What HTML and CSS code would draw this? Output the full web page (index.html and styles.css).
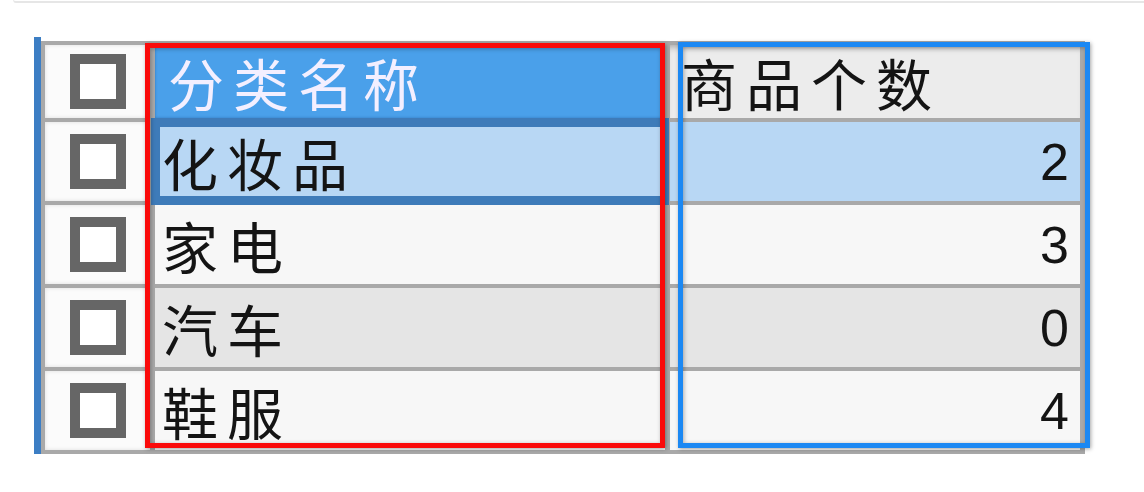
FILE: index.html
```html
<!DOCTYPE html>
<html lang="zh-CN">
<head>
<meta charset="utf-8">
<title>分类</title>
<link rel="stylesheet" href="styles.css">
</head>
<body>
<div class="topline"></div>
<div class="stage">
  <div class="bar"></div>
  <div class="grid">
    <div class="cell chk"><span class="box"></span></div>
    <div class="cell name head">分类名称</div>
    <div class="cell count headc">商品个数</div>

    <div class="cell chk"><span class="box"></span></div>
    <div class="cell name sel">化妆品</div>
    <div class="cell count num selrow">2</div>

    <div class="cell chk"><span class="box"></span></div>
    <div class="cell name light">家电</div>
    <div class="cell count num light">3</div>

    <div class="cell chk"><span class="box"></span></div>
    <div class="cell name grey">汽车</div>
    <div class="cell count num grey">0</div>

    <div class="cell chk"><span class="box"></span></div>
    <div class="cell name light">鞋服</div>
    <div class="cell count num light">4</div>
  </div>
  <div class="mark red"></div>
  <div class="mark blue"></div>
</div>
</body>
</html>
```
FILE: styles.css
```css
html, body {
  margin: 0;
  background: #ffffff;
}

.topline {
  height: 1px;
  margin-left: 13px;
  border-bottom: 2px solid #e6e6e6;
  border-left: 1px solid #ececec;
  border-bottom-left-radius: 5px;
}

.stage {
  position: relative;
  display: flex;
  margin-top: 34px;
  padding-left: 34px;
}

.bar {
  width: 7px;
  background: #3c7ec4;
}

.grid {
  margin-top: 4px;
  display: grid;
  grid-template-columns: 105px 510px 410px;
  grid-template-rows: 73px repeat(4, 79px);
  column-gap: 5px;
  row-gap: 4px;
  padding: 4px 5px 4px 4px;
  background: #a9a9a9;
}

.cell {
  display: flex;
  align-items: center;
  font-family: "Noto Sans CJK SC", "Noto Sans", sans-serif;
  font-size: 56px;
  letter-spacing: 9px;
  color: #141414;
  white-space: nowrap;
}

.chk {
  justify-content: center;
  background: #fbfbfb;
  box-shadow: inset 0 0 4px rgba(0, 0, 0, 0.12);
}

.box {
  width: 56px;
  height: 55px;
  box-sizing: border-box;
  border: 10px solid #666666;
  background: #ffffff;
}

.name {
  padding-left: 7px;
}

.count {
  padding-left: 11px;
}

.num {
  justify-content: flex-end;
  padding-right: 11px;
  font-family: "Liberation Sans", Arial, sans-serif;
  font-size: 52px;
  letter-spacing: 0;
}

.head {
  background: #4aa0ea;
  color: #f3efff;
  padding-left: 13px;
  box-shadow: inset 0 0 3px rgba(20, 60, 120, 0.4);
}

.headc {
  background: #ececec;
  box-shadow: inset 0 7px 7px -5px rgba(0, 0, 0, 0.3);
}

.sel {
  position: relative;
  background: #b8d7f4;
  box-shadow: inset 0 0 0 5px #3e7bb9;
  outline: 4px solid #3e7bb9;
}

.selrow {
  background: #b8d7f4;
}

.light {
  background: #f7f7f7;
}

.grey {
  background: #e5e5e5;
}

.mark {
  position: absolute;
  box-sizing: border-box;
  border: 5px solid;
  box-shadow: 1px 1px 4px rgba(0, 0, 0, 0.35), inset 1px 1px 4px rgba(0, 0, 0, 0.3);
}

.red {
  left: 145px;
  top: 6px;
  width: 520px;
  height: 405px;
  border-color: #fa0a0a;
}

.blue {
  left: 678px;
  top: 5px;
  width: 412px;
  height: 406px;
  border-color: #1b88f3;
}
```
